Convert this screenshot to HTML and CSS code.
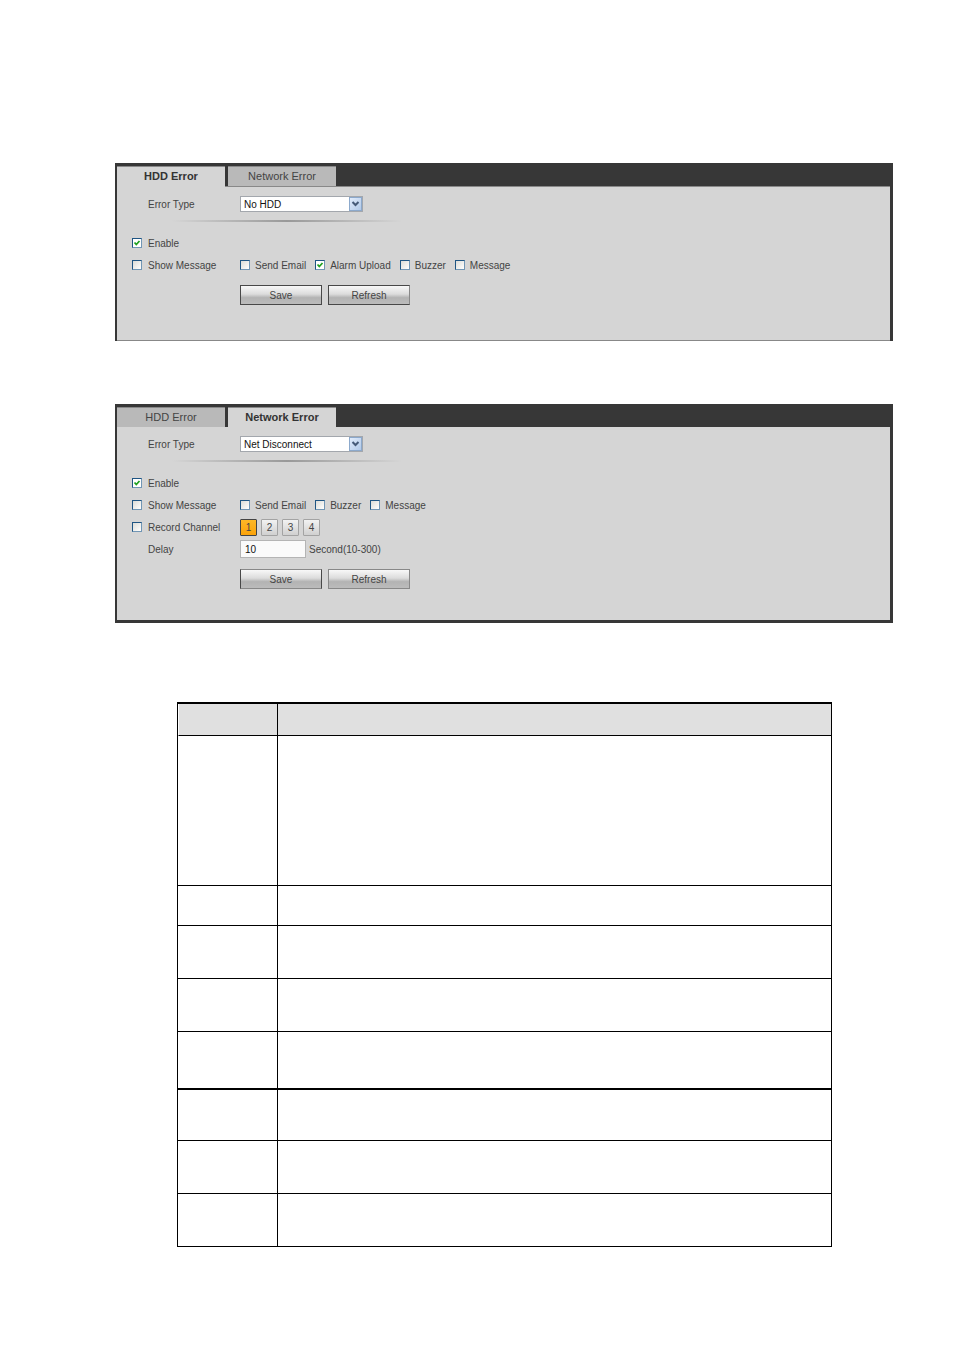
FILE: index.html
```html
<!DOCTYPE html>
<html lang="en">
<head>
    <meta charset="UTF-8">
    <meta name="viewport" content="width=device-width, initial-scale=1.0">
    <title>Abnormality</title>
    <link rel="stylesheet" href="styles.css">
</head>
<body>
    <form class="panel">
        <div class="tabs">
            <button type="button" class="tab active">HDD Error</button>
            <button type="button" class="tab">Network Error</button>
        </div>
        <div class="panel-body">
            <div class="row">
                <label class="name" for="hdd-type">Error Type</label>
                <select id="hdd-type">
                    <option>No HDD</option>
                </select>
            </div>
            <div class="divider"></div>
            <div class="row">
                <label class="check"><input type="checkbox" checked>Enable</label>
            </div>
            <div class="row">
                <label class="check"><input type="checkbox">Show Message</label>
                <div class="options">
                    <label class="check"><input type="checkbox">Send Email</label>
                    <label class="check"><input type="checkbox" checked>Alarm Upload</label>
                    <label class="check"><input type="checkbox">Buzzer</label>
                    <label class="check"><input type="checkbox">Message</label>
                </div>
            </div>
            <div class="actions">
                <button type="button" class="btn">Save</button>
                <button type="button" class="btn">Refresh</button>
            </div>
        </div>
    </form>

    <form class="panel network">
        <div class="tabs">
            <button type="button" class="tab">HDD Error</button>
            <button type="button" class="tab active">Network Error</button>
        </div>
        <div class="panel-body">
            <div class="row">
                <label class="name" for="net-type">Error Type</label>
                <select id="net-type">
                    <option>Net Disconnect</option>
                </select>
            </div>
            <div class="divider"></div>
            <div class="row">
                <label class="check"><input type="checkbox" checked>Enable</label>
            </div>
            <div class="row">
                <label class="check"><input type="checkbox">Show Message</label>
                <div class="options">
                    <label class="check"><input type="checkbox">Send Email</label>
                    <label class="check"><input type="checkbox">Buzzer</label>
                    <label class="check"><input type="checkbox">Message</label>
                </div>
            </div>
            <div class="row">
                <label class="check"><input type="checkbox">Record Channel</label>
                <div class="channels">
                    <button type="button" class="channel selected">1</button>
                    <button type="button" class="channel">2</button>
                    <button type="button" class="channel">3</button>
                    <button type="button" class="channel">4</button>
                </div>
            </div>
            <div class="row">
                <label class="name" for="delay">Delay</label>
                <input type="text" id="delay" value="10">
                <span class="hint">Second(10-300)</span>
            </div>
            <div class="actions">
                <button type="button" class="btn">Save</button>
                <button type="button" class="btn">Refresh</button>
            </div>
        </div>
    </form>

    <table class="params">
        <thead>
            <tr><th></th><th></th></tr>
        </thead>
        <tbody>
            <tr class="tall"><td></td><td></td></tr>
            <tr class="short"><td></td><td></td></tr>
            <tr><td></td><td></td></tr>
            <tr><td></td><td></td></tr>
            <tr class="break"><td></td><td></td></tr>
            <tr class="after-break"><td></td><td></td></tr>
            <tr><td></td><td></td></tr>
            <tr><td></td><td></td></tr>
        </tbody>
    </table>
</body>
</html>
```

FILE: styles.css
```css
* {
    box-sizing: border-box;
}

body {
    margin: 0;
    padding: 163px 61px 103px 115px;
    background-color: #fff;
    color: #444;
    font-family: "Liberation Sans", Arial, sans-serif;
    font-size: 10px;
}

button, input, select {
    margin: 0;
    padding: 0;
    color: inherit;
    font-family: inherit;
    font-size: inherit;
}

/* Panels */
.panel {
    margin-bottom: 63px;
    padding: 0 3px 0 2px;
    background-color: #373737;
}

.panel.network {
    margin-bottom: 79px;
    padding-bottom: 3px;
}

.panel-body {
    padding: 6px 15px 35px;
    background-color: #d5d5d5;
    border-top: 1px solid #888;
    border-bottom: 1px solid #888;
}

.network .panel-body {
    padding-bottom: 31px;
    border: none;
}

.tabs {
    display: flex;
    gap: 3px;
    padding-top: 3px;
}

.tab {
    width: 108px;
    height: 20px;
    padding-bottom: 2px;
    border: none;
    border-top: 1px solid #888;
    background-color: #b9b9b9;
    font-size: 11px;
}

.tab.active {
    height: 21px;
    margin-bottom: -1px;
    background-color: #d5d5d5;
    color: #333;
    font-weight: bold;
}

/* Form rows */
.row {
    display: flex;
    align-items: center;
    height: 22px;
}

.row > .name,
.row > .check {
    width: 108px;
}

.name {
    padding-left: 16px;
}

.check {
    display: flex;
    align-items: center;
    gap: 6px;
}

.options {
    display: flex;
    gap: 9px;
}

.options .check {
    gap: 5px;
}

.divider {
    height: 2px;
    width: 230px;
    margin: 5px 0 10px 40px;
    background: linear-gradient(to right, #d5d5d5, #999 50%, #d5d5d5);
}

input[type="checkbox"] {
    appearance: none;
    width: 10px;
    height: 10px;
    border: 1px solid #1f5583;
    border-right-color: #7196b5;
    border-bottom-color: #7196b5;
    background: linear-gradient(135deg, #dcdcd7, #fff);
}

input[type="checkbox"]:checked {
    background: #fff url("data:image/svg+xml,%3Csvg xmlns='http://www.w3.org/2000/svg' viewBox='0 0 8 8'%3E%3Cpath d='M1.5 3.5 L3.3 5.5 L6.5 2' fill='none' stroke='%2321a121' stroke-width='1.8'/%3E%3C/svg%3E");
}

select {
    appearance: none;
    width: 123px;
    height: 16px;
    padding-left: 3px;
    border: 1px solid #a3a7ad;
    border-radius: 0;
    background: #fff url("data:image/svg+xml,%3Csvg xmlns='http://www.w3.org/2000/svg' viewBox='0 0 13 14'%3E%3Cdefs%3E%3ClinearGradient id='g' x2='1' y2='1'%3E%3Cstop stop-color='%23e3edfc'/%3E%3Cstop offset='1' stop-color='%23b0c8e8'/%3E%3C/linearGradient%3E%3C/defs%3E%3Crect x='.5' y='.5' width='12' height='13' fill='url(%23g)' stroke='%238ca9cc'/%3E%3Cpath d='M3.5 5 L6.5 8 L9.5 5' fill='none' stroke='%23465a78' stroke-width='2'/%3E%3C/svg%3E") no-repeat right center / 13px 14px;
    color: #111;
}

input[type="text"] {
    width: 66px;
    height: 18px;
    padding-left: 4px;
    border: 1px solid #b4b4b4;
    background-color: #fafafa;
    color: #111;
}

.hint {
    margin-left: 3px;
}

/* Buttons */
.channels {
    display: flex;
    gap: 4px;
}

.channel {
    width: 17px;
    height: 17px;
    border: 1px solid #a3a3a3;
    border-radius: 1px;
    background: linear-gradient(#f2f2f2, #d0d0d0);
}

.channel.selected {
    border-color: #444;
    background: linear-gradient(#fdb827, #fba30a);
}

.actions {
    display: flex;
    gap: 6px;
    padding: 9px 0 0 108px;
}

.btn {
    width: 82px;
    height: 20px;
    border: 1px solid #484848;
    background: linear-gradient(#f8f8f8, #dcdcdc 45%, #b3b3b3 65%, #bcbcbc);
}

.btn + .btn {
    border-right-color: #888;
}

.network .btn {
    border-color: #888;
}

.network .btn:first-child {
    border-left-color: #484848;
    border-right-color: #484848;
}

/* Parameter table */
.params {
    width: calc(100% - 123px);
    margin-left: 62px;
    border-spacing: 0;
    border-top: 2px solid #000;
    border-left: 1px solid #000;
    table-layout: fixed;
}

.params th,
.params td {
    height: 53px;
    padding: 0;
    border-right: 1px solid #000;
    border-bottom: 1px solid #000;
}

.params th {
    height: 32px;
    background-color: #e0e0e0;
}

.params th:first-child {
    width: 100px;
    border-left: 1px solid #fff;
}

.params .tall td {
    height: 150px;
}

.params .short td {
    height: 40px;
}

.params .break td {
    height: 58px;
    border-bottom-width: 2px;
}

.params .after-break td {
    height: 51px;
}
```
